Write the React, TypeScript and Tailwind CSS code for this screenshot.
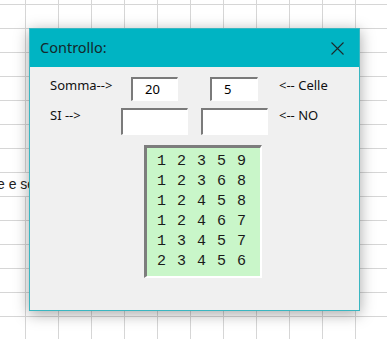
const rows = ["1 2 3 5 9", "1 2 3 6 8", "1 2 4 5 8", "1 2 4 6 7", "1 3 4 5 7", "2 3 4 5 6"];

const Field = ({ value, className }: { value?: string; className: string }) => (
  <div
    className={`${className} bg-white border-t-2 border-l-2 border-b border-r border-t-[#7a7a7a] border-l-[#7a7a7a] border-b-white border-r-white flex items-center pl-[12px] text-[13px] text-black`}
  >
    {value}
  </div>
);

const App = () => {
  return (
    <div className="relative w-[387px] h-[339px] overflow-hidden bg-white bg-[linear-gradient(to_right,#d6d6d6_1px,transparent_1px),linear-gradient(to_bottom,#d6d6d6_1px,transparent_1px)] bg-size-[33px_24px] bg-position-[25px_4px] font-['Noto_Sans','Liberation_Sans',sans-serif]">
      {/* cell overflow text behind the dialog */}
      <div className="absolute left-0 top-[173px] w-[40px] h-[23px] bg-white overflow-hidden">
        <span className="block -ml-[3px] text-[14px] leading-[23px] text-[#222] whitespace-nowrap font-['Liberation_Sans',sans-serif]">
          e e se
        </span>
      </div>

      {/* dialog window */}
      <div className="absolute left-[29px] top-[28px] w-[331px] h-[283px] border border-[#3ab6c1] bg-[#f0f0f0] shadow-[0_3px_14px_rgba(0,0,0,0.35)] flex flex-col">
        <div className="h-[38px] bg-[#00b4c3] flex items-center justify-between pl-[10px] pr-[15px]">
          <span className="text-[14.5px] text-[#14282b]">Controllo:</span>
          <svg width="13" height="13" viewBox="0 0 13 13">
            <path d="M0.5 0.5 L12.5 12.5 M12.5 0.5 L0.5 12.5" stroke="#1c2a2c" strokeWidth="1.1" fill="none" />
          </svg>
        </div>

        <div className="flex flex-col pt-[10px] pl-[20px] text-[13px] text-[#111]">
          <div className="flex items-start h-[24px]">
            <span className="w-[81px] -mt-[1px] leading-[18px]">Somma--&gt;</span>
            <Field value="20" className="w-[47px] h-[24px]" />
            <Field value="5" className="ml-[32px] w-[48px] h-[24px]" />
            <span className="ml-[21px] -mt-[1px] leading-[18px]">&lt;-- Celle</span>
          </div>
          <div className="flex items-start h-[27px] mt-[7px]">
            <span className="w-[71px] -mt-[2px] leading-[18px]">SI --&gt;</span>
            <Field className="w-[67px] h-[27px]" />
            <Field className="ml-[13px] w-[67px] h-[27px]" />
            <span className="ml-[11px] -mt-[2px] leading-[18px]">&lt;-- NO</span>
          </div>

          <div className="mt-[10px] ml-[94px] w-[118px] h-[133px] bg-[#c9f6c9] border-t-[3px] border-l-[3px] border-r-2 border-b-2 border-t-[#7d7d7d] border-l-[#7d7d7d] border-r-white border-b-white pt-[4px] pl-[10px]">
            {rows.map((r) => (
              <div
                key={r}
                className="font-['Liberation_Mono',monospace] text-[15px] leading-[20px] tracking-[1px] text-[#1a1a1a] whitespace-pre"
              >
                {r}
              </div>
            ))}
          </div>
        </div>
      </div>
    </div>
  );
};

export default App;
